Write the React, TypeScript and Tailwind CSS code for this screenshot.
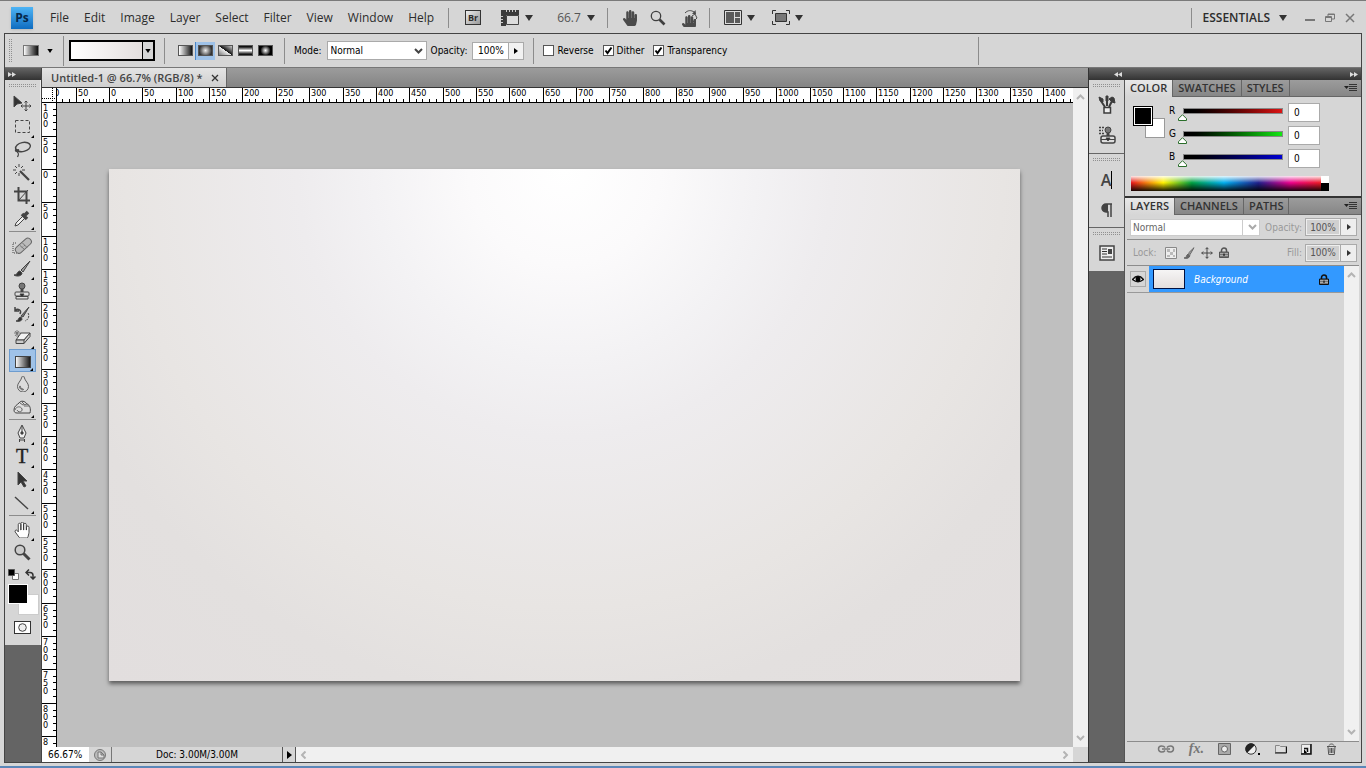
import { useState } from "react";
import type { ReactNode } from "react";
import { FaHandPaper, FaTint } from "react-icons/fa";

const ui = "font-['DejaVu_Sans_Condensed','DejaVu_Sans',sans-serif]";
const sans = "font-['Open_Sans','Noto_Sans',sans-serif]";

const menus = ["File", "Edit", "Image", "Layer", "Select", "Filter", "View", "Window", "Help"];

function Caret({ small = false }: { small?: boolean }) {
  return (
    <svg viewBox="0 0 8 6" className={`shrink-0 ${small ? "h-[4px] w-[6px] fill-black" : "h-[6px] w-[8px] fill-[#333]"}`}>
      <path d="M0 0h8L4 6z" />
    </svg>
  );
}

function RightCaret() {
  return (
    <svg viewBox="0 0 4 6" className="h-[6px] w-[4px] fill-current">
      <path d="M0 0l4 3-4 3z" />
    </svg>
  );
}

function Chevron({ className = "" }: { className?: string }) {
  return (
    <svg viewBox="0 0 9 6" className={`h-[6px] w-[9px] fill-none stroke-current stroke-2 ${className}`}>
      <path d="M1 1l3.500 3.500L8 1" />
    </svg>
  );
}

function Divider({ className = "" }: { className?: string }) {
  return <div className={`w-px shrink-0 bg-[#8c8c8c] ${className}`} />;
}

function Grip({ className = "" }: { className?: string }) {
  return (
    <svg viewBox="0 0 27 4" className={`h-[4px] w-[27px] ${className}`}>
      <path d="M0 .5h27M0 2.500h27" stroke="#909090" strokeDasharray="1 1" />
    </svg>
  );
}

/* ---------- menu bar ---------- */

function MenuBar() {
  return (
    <header className={`flex h-[33px] shrink-0 items-center border-t border-[#7a7a7a] px-[11px] pt-px ${sans} text-[#2c2c2c]`}>
      <div className="flex size-[22px] items-center justify-center bg-gradient-to-b from-[#4db4f5] to-[#0d6cc0] text-xs font-bold text-[#06284a] shadow">
        Ps
      </div>
      <nav className="ml-[17px] flex gap-[15px] text-xs">
        {menus.map((m) => (
          <button key={m}>{m}</button>
        ))}
      </nav>
      <Divider className="ml-[14px] h-5" />
      <button aria-label="Launch Bridge" className="ml-4 flex h-[15px] w-4 items-center justify-center border border-[#333] bg-gradient-to-br from-[#eee] to-[#999] text-[9px] leading-none font-bold">
        Br
      </button>
      <button aria-label="View extras" className="ml-5 flex items-center gap-[6px]">
        <svg viewBox="0 0 18 16" className="h-4 w-[18px]">
          <path d="M0 0h18v5H5v11H0z" fill="#3c3c3c" />
          <path d="M5.500 0v2M8.500 0v2M11.500 0v2M14.500 0v2M0 6.500h2M0 9.500h2M0 12.500h2" stroke="#ccc" />
          <path d="M5.500 5.500h12v9h-12z" fill="#ddd" stroke="#444" />
        </svg>
        <Caret />
      </button>
      <button className="ml-6 flex items-center gap-[6px] text-xs text-[#555]">
        66.7 <Caret />
      </button>
      <Divider className="ml-3 h-5" />
      <button aria-label="Hand" className="ml-[14px]">
        <FaHandPaper className="size-4 text-[#4a4a4a]" />
      </button>
      <button aria-label="Zoom" className="ml-3">
        <svg viewBox="0 0 16 16" className="size-4 fill-none stroke-[#3f3f3f]">
          <circle cx="6" cy="6" r="4.700" strokeWidth="1.300" />
          <path d="M9.500 9.500l5 5" strokeWidth="2.600" />
        </svg>
      </button>
      <button aria-label="Rotate view" className="ml-[14px]">
        <svg viewBox="0 0 18 18" className="size-[18px]">
          <FaHandPaper x="1" y="6" width="11" height="11" fill="#4a4a4a" />
          <path d="M5 4c3-3 6-3 9-1M12 7l3-2 2 4-5 5" fill="none" stroke="#4a4a4a" />
          <path d="M12 5l4 0-.5-4z" fill="#4a4a4a" />
        </svg>
      </button>
      <Divider className="ml-[11px] h-5" />
      <button aria-label="Arrange documents" className="ml-[14px] flex items-center gap-[5px]">
        <svg viewBox="0 0 18 16" className="h-4 w-[18px]">
          <path d="M.5.5h17v14H.5z" fill="#ddd" stroke="#333" />
          <path d="M2 2h8v11H2zM11 2h5v5h-5zM11 8h5v5h-5z" fill="#5a5a5a" />
        </svg>
        <Caret />
      </button>
      <button aria-label="Screen mode" className="ml-[17px] flex items-center gap-[5px]">
        <svg viewBox="0 0 18 15" className="h-[15px] w-[18px]">
          <path d="M.5 4V.5H4M14 .5h3.500V4M17.500 11v3.500H14M4 14.500H.5V11" fill="none" stroke="#333" />
          <path d="M3.500 3.500h11v8h-11z" fill="#777" stroke="#333" />
        </svg>
        <Caret />
      </button>
      <Divider className="ml-auto h-5" />
      <button className="ml-[11px] flex items-center gap-[9px] text-xs font-semibold">
        ESSENTIALS <Caret />
      </button>
      <div className="ml-[18px] flex items-center gap-[10px] text-[#777]">
        <button aria-label="Minimize">
          <svg viewBox="0 0 10 10" className="size-[10px] fill-none stroke-current stroke-2">
            <path d="M0 7h10" />
          </svg>
        </button>
        <button aria-label="Restore">
          <svg viewBox="0 0 10 10" className="size-[10px] fill-none stroke-current">
            <path d="M.5 3.500h6v5h-6zM.5 4.500h6M3 3V1h6.500v5H7M3 1.500h6" />
          </svg>
        </button>
        <button aria-label="Close">
          <svg viewBox="0 0 10 10" className="size-[10px] fill-none stroke-current">
            <path d="M1 1l8 8M9 1L1 9" strokeWidth="1.500" />
          </svg>
        </button>
      </div>
    </header>
  );
}

/* ---------- options bar ---------- */

const gradientKinds = [
  { name: "Linear", fill: "bg-[linear-gradient(90deg,#fff,#111)]" },
  { name: "Radial", fill: "bg-[radial-gradient(circle,#eee,#333_80%)]" },
  { name: "Angle", fill: "bg-[linear-gradient(35deg,#777,#eee_48%,#111_50%,#ccc)]" },
  { name: "Reflected", fill: "bg-[linear-gradient(180deg,#111_10%,#fff_50%,#111_90%)]" },
  { name: "Diamond", fill: "bg-[radial-gradient(circle,#fff,#000_65%)]" },
];

function Check({ label, on = false }: { label: string; on?: boolean }) {
  const [checked, setChecked] = useState(on);
  return (
    <label className="flex items-center gap-[3px]">
      <span className="grid">
        <input
          type="checkbox"
          checked={checked}
          onChange={(e) => setChecked(e.target.checked)}
          className="col-start-1 row-start-1 size-[11px] appearance-none border border-[#555] bg-white"
        />
        {checked && (
          <svg viewBox="0 0 11 11" className="pointer-events-none col-start-1 row-start-1 size-[11px] fill-none stroke-black stroke-2">
            <path d="M2.500 5.500l2 2.500 4-5.500" />
          </svg>
        )}
      </span>
      {label}
    </label>
  );
}

function OptionsBar() {
  const [kind, setKind] = useState("Radial");
  return (
    <div className={`flex h-[34px] shrink-0 items-center border-b border-[#777] pl-1 ${ui} text-[10px] text-black`}>
      <svg viewBox="0 0 4 24" className="h-6 w-1">
        <path d="M.5 0v24M2.500 0v24" stroke="#909090" strokeDasharray="1 1" />
      </svg>
      <button aria-label="Tool preset" className="ml-[10px] flex items-center gap-2">
        <span className="h-[11px] w-4 border border-[#777] bg-gradient-to-r from-white to-[#111]" />
        <Caret small />
      </button>
      <Divider className="ml-[10px] h-[30px]" />
      <button aria-label="Gradient picker" className="ml-[5px] flex h-[21px] w-[86px] border-2 border-black">
        <span className="h-full flex-1 bg-gradient-to-r from-white to-[#e3dedd]" />
        <span className="flex h-full w-[11px] items-center justify-center border-l border-black">
          <Caret small />
        </span>
      </button>
      <Divider className="ml-[9px] h-[26px]" />
      <div className="ml-[10px] flex">
        {gradientKinds.map((g) => (
          <button
            key={g.name}
            aria-label={g.name}
            onClick={() => setKind(g.name)}
            className={`flex h-[18px] w-5 items-center justify-center ${kind === g.name ? "border-l border-[#4b86c8] bg-[#9fc2e8]" : ""}`}
          >
            <span className={`h-[11px] w-[15px] border border-[#555] ${g.fill}`} />
          </button>
        ))}
      </div>
      <Divider className="ml-[9px] h-[26px]" />
      <label className="ml-[9px] flex items-center gap-[5px]">
        Mode:
        <span className="grid items-center">
          <select className="col-start-1 row-start-1 h-[19px] w-[100px] appearance-none border border-[#aaa] bg-white px-[3px]">
            <option>Normal</option>
          </select>
          <Chevron className="pointer-events-none col-start-1 row-start-1 mr-1 justify-self-end text-[#444]" />
        </span>
      </label>
      <label className="ml-1 flex items-center gap-[5px]">
        Opacity:
        <input defaultValue="100%" className="h-[18px] w-9 border border-r-0 border-[#aaa] bg-white text-center" />
      </label>
      <button aria-label="Opacity slider" className="flex h-[18px] w-4 items-center justify-center border border-[#aaa] bg-[#f2f2f2]">
        <RightCaret />
      </button>
      <Divider className="ml-[9px] h-[26px]" />
      <div className="ml-[9px] flex gap-[9px]">
        <Check label="Reverse" />
        <Check label="Dither" on />
        <Check label="Transparency" on />
      </div>
      <Divider className="mr-[382px] ml-auto h-[28px]" />
    </div>
  );
}

/* ---------- tools ---------- */

type Tool = { name: string; icon: ReactNode; menu?: boolean };

const toolGroups: Tool[][] = [
  [
    {
      name: "Move",
      icon: (
        <>
          <path d="M3 3v11l3-3 5-1z" fill="#333" />
          <path d="M15 8v10M10 13h10M13.500 9.500L15 8l1.500 1.500M13.500 16.500L15 18l1.500-1.500M11.500 11.500L10 13l1.500 1.500M18.500 11.500L20 13l-1.500 1.500" />
        </>
      ),
    },
    { name: "Marquee", menu: true, icon: <path d="M4.500 4.500h14v12h-14z" strokeDasharray="3 2" /> },
    {
      name: "Lasso",
      menu: true,
      icon: (
        <>
          <ellipse cx="12" cy="8" rx="7.500" ry="4.500" transform="rotate(-12 12 8)" strokeWidth="1.400" />
          <path d="M5.500 10c-2 1-1 3 1 2s1-2-1-1M6 12.500c2 2 2 3 .5 5.500" strokeWidth="1.300" />
        </>
      ),
    },
    {
      name: "Magic wand",
      menu: true,
      icon: (
        <>
          <path d="M9 9l9 9" strokeWidth="2.200" />
          <path d="M8 2v3M8 11v3M2 8h3M11 8h3M4 4l2 2M12 4l-2 2M4 12l2-2" />
        </>
      ),
    },
    {
      name: "Crop",
      menu: true,
      icon: (
        <>
          <path d="M7.500 2v13.500H19M3 6.500h12.500V19" strokeWidth="2" />
          <path d="M8 15l9-10" />
        </>
      ),
    },
    {
      name: "Eyedropper",
      menu: true,
      icon: (
        <>
          <path d="M4 18l1-3 7-7 2 2-7 7z" fill="#eee" />
          <path d="M11 6l5 5M13 8l4-4" strokeWidth="3.500" />
        </>
      ),
    },
  ],
  [
    {
      name: "Healing brush",
      menu: true,
      icon: (
        <>
          <path d="M8 18H2V8h3" strokeDasharray="1 1" />
          <rect x="3" y="7.500" width="19" height="7" rx="3.500" transform="rotate(-42 12 11)" fill="#bbb" stroke="#666" />
          <path d="M9 10.500l4.500 4M11.500 8l4.500 4.500M11 12.500l1-1M13 11l1-1" stroke="#777" />
        </>
      ),
    },
    {
      name: "Brush",
      menu: true,
      icon: (
        <>
          <path d="M19 3l-9 9 2 2z" fill="#999" />
          <path d="M3 17c4 0 3-4 6-4l2 2c0 3-5 4-8 2z" fill="#333" />
        </>
      ),
    },
    {
      name: "Clone stamp",
      menu: true,
      icon: (
        <>
          <circle cx="11" cy="5" r="3" fill="#777" />
          <path d="M11 8v3" strokeWidth="3" />
          <rect x="4" y="11" width="14" height="4" rx="1" fill="#ddd" />
          <path d="M5 15.500h12v2.500H5z" fill="#ddd" />
          <path d="M9 13h4l-2 3z" fill="#222" />
        </>
      ),
    },
    {
      name: "History brush",
      menu: true,
      icon: (
        <>
          <path d="M18 3l-8 9 2 1z" fill="#777" />
          <path d="M5 17c3 0 2-4 5-4l1 2c0 2-4 3-6 2z" fill="#333" />
          <path d="M4 6c3-2 7 0 5 4M4 3v4h4" strokeWidth="1.500" />
          <path d="M17 9c2 3 0 7-3 8" strokeDasharray="2 1" />
        </>
      ),
    },
    {
      name: "Eraser",
      menu: true,
      icon: (
        <>
          <path d="M10 6h9l-6 7H5z" fill="#f2f2f2" />
          <path d="M5 13v3.500h8l6-7V6l-6 7zM13 13v3.500" fill="#ccc" />
          <path d="M6 3v7M3 6h7M4 4l4 5M8 4L4 9" stroke="#666" strokeWidth=".8" />
        </>
      ),
    },
    {
      name: "Gradient",
      menu: true,
      icon: (
        <>
          <defs>
            <linearGradient id="toolGradient">
              <stop stopColor="#fff" />
              <stop offset="1" stopColor="#111" />
            </linearGradient>
          </defs>
          <rect x="4.500" y="6.500" width="15" height="11" fill="url(#toolGradient)" />
        </>
      ),
    },
    {
      name: "Blur",
      menu: true,
      icon: <FaTint x="4" y="3" width="13" height="15" fill="#dcdcdc" stroke="#555" strokeWidth="30" />,
    },
    {
      name: "Sponge",
      menu: true,
      icon: (
        <>
          <path d="M3 14c0-4 3-5 5-7 2-3 6-2 8 1 3 1 4 5 3 9H6c-2 0-3-1-3-3z" fill="#ddd" />
          <path d="M4 14c1-4 6-4 7-1s-4 4-5 1M9 7l3 2 4-1M11 6l2 2M13 10h5" stroke="#666" />
        </>
      ),
    },
  ],
  [
    {
      name: "Pen",
      menu: true,
      icon: (
        <>
          <path d="M11 2l4 8-2 5H9l-2-5z" fill="#eee" />
          <path d="M11 3v6M8 17h6M8.500 16v3M13.500 16v3" />
          <circle cx="11" cy="10" r="1.200" fill="#333" />
        </>
      ),
    },
    {
      name: "Type",
      menu: true,
      icon: (
        <text x="11" y="17" textAnchor="middle" fontSize="20" fontFamily="Liberation Serif, serif" fill="#222" stroke="#222" strokeWidth=".4">
          T
        </text>
      ),
    },
    { name: "Path selection", menu: true, icon: <path d="M7 3v13l3-3 3 5 2-1-3-5h4z" fill="#333" /> },
    { name: "Line", menu: true, icon: <path d="M4 5l13 12" strokeWidth="1.400" /> },
  ],
  [
    {
      name: "Hand",
      menu: true,
      icon: <FaHandPaper x="3" y="3" width="16" height="16" fill="#fff" stroke="#333" strokeWidth="28" />,
    },
    {
      name: "Zoom",
      icon: (
        <>
          <circle cx="9" cy="8" r="4.800" fill="#ccc" strokeWidth="1.500" />
          <path d="M12.500 11.500l6 6" strokeWidth="3" />
        </>
      ),
    },
  ],
];

function DoubleArrow({ left = false }: { left?: boolean }) {
  return (
    <svg viewBox="0 0 8 5" className="h-[5px] w-[8px] fill-[#ddd]">
      {left ? <path d="M4 0v5L0 2.500zM8 0v5L4 2.500z" /> : <path d="M0 0v5l4-2.500zM4 0v5l4-2.500z" />}
    </svg>
  );
}

function Toolbar() {
  const [active, setActive] = useState("Gradient");
  return (
    <aside className="flex w-[37px] shrink-0 flex-col border-r border-[#444] bg-[#646464]">
      <div className="flex h-3 items-center bg-gradient-to-b from-[#646464] to-[#333] pl-[3px]">
        <DoubleArrow />
      </div>
      <div className="flex flex-col items-center border-r border-[#f0f0f0] bg-[#d6d6d6] pr-px pb-[11px]">
        <Grip className="mt-1 mb-1" />
        {toolGroups.map((group, i) => (
          <div key={i} className={`flex flex-col ${i > 0 ? "mt-px border-t border-[#8c8c8c] pt-[2px]" : ""}`}>
            {group.map((tool) => (
              <button
                key={tool.name}
                aria-label={tool.name}
                onClick={() => setActive(tool.name)}
                className={`relative h-[23px] w-[27px] ${active === tool.name ? "border border-[#6d9ccf] bg-[#9fc2e8]" : ""}`}
              >
                <svg viewBox="0 0 22 22" className="mx-auto size-[22px] fill-none stroke-[#444]">
                  {tool.icon}
                </svg>
                {tool.menu && (
                  <svg viewBox="0 0 4 4" className="absolute right-[2px] bottom-0 size-[3px] fill-black">
                    <path d="M4 0v4H0z" />
                  </svg>
                )}
              </button>
            ))}
          </div>
        ))}
        <div className="mt-[5px] flex w-7 justify-between">
          <button aria-label="Default colors">
            <svg viewBox="0 0 11 11" className="size-[11px]">
              <path d="M4.500 4.500h6v6h-6z" fill="#fff" stroke="#777" />
              <path d="M.5.5h6v6h-6z" stroke="#555" />
            </svg>
          </button>
          <button aria-label="Switch colors">
            <svg viewBox="0 0 11 11" className="size-[11px] fill-none stroke-[#333] stroke-[1.500]">
              <path d="M1 3.500h4q3 0 3 3V10M4 .5l-3 3 3 3M5.500 7.500L8 10l2.500-2.500" />
            </svg>
          </button>
        </div>
        <div className="mt-1 grid w-[31px] self-end">
          <button aria-label="Background color" className="col-start-1 row-start-1 mt-[10px] size-[21px] justify-self-end border border-[#ccc] bg-white" />
          <button aria-label="Foreground color" className="relative col-start-1 row-start-1 size-5 border border-white bg-black" />
        </div>
        <button aria-label="Quick mask" className="mt-[6px] flex h-[13px] w-[17px] items-center justify-center border border-[#333] bg-white">
          <svg viewBox="0 0 9 9" className="size-[9px] fill-[#eee] stroke-[#444]">
            <circle cx="4.500" cy="4.500" r="3.800" />
          </svg>
        </button>
      </div>
    </aside>
  );
}

/* ---------- document ---------- */

// screen pixels per 50 document pixels at 66.7% zoom
const STEP = 33.36;

function ticks(from: number, count: number, origin: number) {
  return Array.from({ length: count }, (_, i) => {
    const n = from + i;
    return { value: Math.abs(n * 50), pos: Math.round(origin + n * STEP) };
  });
}

function HorizontalRuler() {
  return (
    <svg className={`h-[15px] min-w-0 flex-1 bg-white ${ui} text-[9px]`}>
      {ticks(-2, 31, 52).map((t) => (
        <g key={t.pos}>
          <path d={`M${t.pos + 0.5} 0v15`} stroke="#000" />
          {[1, 2, 3, 4].map((k) => (
            <path key={k} d={`M${t.pos + Math.round((k * STEP) / 5) + 0.5} 11v4`} stroke="#000" />
          ))}
          <text x={t.pos + 2} y="8">
            {t.value}
          </text>
        </g>
      ))}
      <path d="M0 14.500h4000" stroke="#000" />
    </svg>
  );
}

function VerticalRuler() {
  return (
    <svg className={`h-full w-[15px] shrink-0 bg-white ${ui} text-[9px]`}>
      {ticks(-2, 20, 66).map((t) => (
        <g key={t.pos}>
          <path d={`M0 ${t.pos + 0.5}h15`} stroke="#000" />
          {[1, 2, 3, 4].map((k) => (
            <path key={k} d={`M11 ${t.pos + Math.round((k * STEP) / 5) + 0.5}h4`} stroke="#000" />
          ))}
          {String(t.value)
            .split("")
            .slice(0, t.value > 800 ? 1 : 3)
            .map((digit, k) => (
              <text key={k} x="1" y={t.pos + 9 + k * 8}>
                {digit}
              </text>
            ))}
        </g>
      ))}
      <path d="M14.500 0v3000" stroke="#000" />
    </svg>
  );
}

function DocumentWindow() {
  return (
    <main className="flex min-w-0 flex-1 flex-col bg-[#bfbfbf]">
      <div className={`flex h-5 shrink-0 border-b border-[#333] bg-gradient-to-b from-[#9c9c9c] to-[#848484] ${sans}`}>
        <div className="flex items-center gap-2 border-r border-[#666] bg-gradient-to-b from-[#e4e4e4] to-[#cfcfcf] pt-px pr-[7px] pl-[9px] text-[11px] font-semibold text-[#444]">
          Untitled-1 @ 66.7% (RGB/8) *
          <button aria-label="Close document">
            <svg viewBox="0 0 8 8" className="size-2 stroke-[#333] stroke-[1.300]">
              <path d="M1 1l6 6M7 1L1 7" />
            </svg>
          </button>
        </div>
      </div>
      <div className="flex min-h-0 flex-1">
        <div className="flex min-w-0 flex-1 flex-col">
          <div className="flex">
            <svg viewBox="0 0 15 15" className="size-[15px] shrink-0 bg-white">
              <path d="M10.500 0v15M0 10.500h15" stroke="#000" strokeDasharray="1 1" />
              <path d="M14.500 0v15M0 14.500h15" stroke="#000" />
            </svg>
            <HorizontalRuler />
          </div>
          <div className="flex min-h-0 flex-1">
            <VerticalRuler />
            <div className="min-w-0 flex-1 overflow-hidden pt-[66px] pr-[53px] pl-[52px]">
              <div className="aspect-[1366/768] w-full bg-[radial-gradient(circle_at_50%_0%,#ffffff_0%,#fbfafb_14%,#f3f2f4_28%,#eeecee_39%,#e8e5e3_64%,#e3e0df_78%,#e2dede_100%)] shadow-[0_3px_4px_rgba(0,0,0,0.500)]" />
            </div>
          </div>
        </div>
        <div className="flex w-[15px] shrink-0 flex-col items-center justify-between bg-[#f0f0f0] py-[6px] text-[#b4b4b4]">
          <Chevron className="rotate-180" />
          <Chevron />
        </div>
      </div>
      <div className={`flex h-[15px] shrink-0 bg-[#d6d6d6] ${ui} text-[10px] text-black`}>
        <input aria-label="Zoom level" defaultValue="66.67%" className="w-[47px] bg-white pl-[6px]" />
        <button aria-label="Version cue" className="flex w-[23px] items-center justify-center border-r border-[#777]">
          <svg viewBox="0 0 12 12" className="size-3 fill-[#bbb] stroke-[#777]">
            <circle cx="6" cy="6" r="5.500" />
            <path d="M4 3h3v3h3v3H4zM7 3l3 3" fill="#ddd" />
          </svg>
        </button>
        <div className="flex w-[171px] items-center justify-center border-r border-[#555]">Doc: 3.00M/3.00M</div>
        <button aria-label="Status menu" className="flex w-[13px] items-center justify-center border-r border-[#555]">
          <svg viewBox="0 0 5 8" className="h-2 w-[5px]">
            <path d="M0 0l5 4-5 4z" />
          </svg>
        </button>
        <div className="flex flex-1 items-center justify-between bg-[#f0f0f0] px-[3px] text-[#b4b4b4]">
          <Chevron className="rotate-90" />
          <Chevron className="-rotate-90" />
        </div>
        <div className="w-[15px]" />
      </div>
    </main>
  );
}

/* ---------- panels ---------- */

function Dock() {
  return (
    <div className="flex w-9 shrink-0 flex-col border-r border-[#555] bg-[#646464]">
      <div className="flex h-[74px] flex-col items-center border-b border-[#666] bg-[#d6d6d6] pt-1">
        <Grip />
        <button aria-label="Brushes" className="mt-[7px]">
          <svg viewBox="0 0 18 20" className="h-5 w-[18px] fill-[#3c3c3c] stroke-[#3c3c3c]">
            <path d="M7 12L3 6M9 11V2M11 12l3-6" strokeWidth="2" fill="none" />
            <path d="M1 2l4 2v3L2 6zM11 4l3-2 2 1 1 5-3-1zM8 1h2v5H8z" />
            <path d="M6 12.500h6.500v5.500H6z" fill="#eee" strokeWidth="1.500" />
          </svg>
        </button>
        <button aria-label="Clone source" className="mt-[11px]">
          <svg viewBox="0 0 18 18" className="size-[18px] fill-none stroke-[#444]">
            <path d="M1 1.500h5M1 4.500h4M1 7.500h5" strokeDasharray="2 1" strokeWidth="1.500" />
            <circle cx="10" cy="4" r="3" fill="#777" />
            <path d="M10 7v4" strokeWidth="3" />
            <rect x="3" y="10" width="14" height="7" rx="2" fill="#ddd" strokeWidth="1.500" />
            <path d="M3 13.500h14" />
            <path d="M8 12h4l-2 3z" fill="#222" />
          </svg>
        </button>
      </div>
      <div className="flex h-[74px] flex-col items-center border-b border-[#666] bg-[#d6d6d6] pt-1">
        <Grip />
        <button aria-label="Character" className={`mt-[9px] flex h-[18px] items-center border-r border-black text-base ${sans} font-semibold text-[#444]`}>
          A
        </button>
        <button aria-label="Paragraph" className="mt-[14px]">
          <svg viewBox="0 0 12 15" className="h-[15px] w-3">
            <path d="M11 1H5a4 4 0 000 8h2v5M10 1v13" fill="none" stroke="#444" strokeWidth="1.500" />
            <path d="M7 1H5a4 4 0 000 8h2z" fill="#444" />
          </svg>
        </button>
      </div>
      <div className="flex h-[43px] flex-col items-center bg-[#d6d6d6] pt-1">
        <Grip />
        <button aria-label="Layer comps" className="mt-[9px]">
          <svg viewBox="0 0 16 16" className="size-4">
            <path d="M1 1h14v14H1z" fill="#eee" stroke="#444" strokeWidth="1.500" />
            <path d="M3 4h5M3 6.500h5M3 9h5M3 12h10" stroke="#333" />
            <path d="M9 4h4v5H9z" fill="#444" />
          </svg>
        </button>
      </div>
    </div>
  );
}

function Tabs({ names }: { names: string[] }) {
  return (
    <div className={`flex h-[17px] shrink-0 bg-gradient-to-b from-[#9c9c9c] to-[#858585] ${sans} text-[11px] font-semibold text-[#333]`}>
      {names.map((name, i) => (
        <button
          key={name}
          className={`flex items-center border-r border-[#666] px-[5px] ${i === 0 ? "bg-gradient-to-b from-[#e8e8e8] to-[#d6d6d6]" : "border-b"}`}
        >
          {name}
        </button>
      ))}
      <div className="flex flex-1 items-center justify-end border-b border-[#666] pr-1">
        <button aria-label="Panel menu">
          <svg viewBox="0 0 13 8" className="h-2 w-[13px]">
            <path d="M0 2h5L2.500 5z" fill="#222" />
            <path d="M5 .5h8M5 2.500h8M5 4.500h8M5 6.500h8" stroke="#333" />
          </svg>
        </button>
      </div>
    </div>
  );
}

const channels = [
  { name: "R", bar: "bg-gradient-to-r from-black to-[#dc1414]" },
  { name: "G", bar: "bg-gradient-to-r from-black to-[#14e614]" },
  { name: "B", bar: "bg-gradient-to-r from-black to-[#0000d2]" },
];

function ColorPanel() {
  return (
    <section className={`flex h-[118px] shrink-0 flex-col border-b-2 border-[#333] bg-[#d6d6d6] ${ui}`}>
      <Tabs names={["COLOR", "SWATCHES", "STYLES"]} />
      <div className="flex pt-[6px] pl-2 text-[10px]">
        <div className="mt-[3px] grid h-8 w-8 shrink-0">
          <button aria-label="Set background color" className="col-start-1 row-start-1 size-5 self-end justify-self-end border border-[#999] bg-white" />
          <button aria-label="Set foreground color" className="relative col-start-1 row-start-1 size-5 border border-black bg-black outline-1 -outline-offset-2 outline-white" />
        </div>
        <div className="ml-1 flex flex-col gap-1">
          {channels.map((c) => (
            <label key={c.name} className="flex h-[19px] items-center">
              <span className="w-[14px] pb-1">{c.name}</span>
              <span className="flex flex-col pt-[3px]">
                <span className={`h-[6px] w-[100px] border border-[#888] ${c.bar}`} />
                <svg viewBox="0 0 9 7" className="-ml-[5px] h-[7px] w-[9px] fill-white stroke-[#2a6e2a]">
                  <path d="M4.500.7l4 4v1.800h-8V4.700z" />
                </svg>
              </span>
              <input defaultValue="0" className="ml-[5px] h-[19px] w-8 border border-[#aaa] bg-white pl-[5px]" />
            </label>
          ))}
        </div>
      </div>
      <div className="mt-[8px] ml-[6px] flex h-[15px] w-[198px] shrink-0">
        <div className="flex-1 bg-[linear-gradient(180deg,rgba(255,255,255,0.900),transparent_45%,rgba(0,0,0,0.900)),linear-gradient(90deg,#e8141c,#fff200_17%,#00a040_32%,#00aeef_49%,#20208c_67%,#ec008c_84%,#ed1c24)]" />
        <div className="w-2 bg-gradient-to-b from-white from-50% to-black to-50%" />
      </div>
    </section>
  );
}

function Percent({ label }: { label: string }) {
  return (
    <label className="ml-auto flex items-center gap-[3px] text-[#999]">
      {label}
      <span className="flex h-[18px] border border-[#aaa]">
        <input defaultValue="100%" className="w-[34px] border border-[#eee] bg-[#d0d0d0] text-center text-[#555]" />
        <span className="flex w-4 items-center justify-center border-l border-[#aaa] bg-[#eee] text-[#333]">
          <RightCaret />
        </span>
      </span>
    </label>
  );
}

function Padlock({ className = "" }: { className?: string }) {
  return (
    <svg viewBox="0 0 10 11" className={`h-[11px] w-[10px] ${className}`}>
      <path d="M2.500 5V3.500a2.500 2.500 0 015 0V5" fill="none" stroke="currentColor" strokeWidth="1.500" />
      <path d="M.5 5h9v5.500h-9z" fill="#777" stroke="currentColor" />
      <path d="M1 6.500h8M1 8.500h8" stroke="#aaa" />
      <path d="M4.500 6.500h1V9h-1z" />
    </svg>
  );
}

const footer: { name: string; icon: ReactNode }[] = [
  {
    name: "Link layers",
    icon: (
      <svg viewBox="0 0 18 8" className="h-2 w-[18px] fill-none stroke-[#777] stroke-[1.500]">
        <path d="M8 2.500Q7 1 4.500 1a3 3 0 000 6Q7 7 8 5.500M10 2.500Q11 1 13.500 1a3 3 0 010 6Q11 7 10 5.500M5 4h8" />
      </svg>
    ),
  },
  {
    name: "Layer style",
    icon: <span className="font-['Liberation_Serif',serif] text-sm leading-none font-bold text-[#777] italic">fx.</span>,
  },
  {
    name: "Add mask",
    icon: (
      <svg viewBox="0 0 13 12" className="h-3 w-[13px]">
        <path d="M.5.5h12v11H.5z" fill="#aaa" stroke="#666" />
        <circle cx="6.500" cy="6" r="3" fill="#eee" stroke="#666" />
      </svg>
    ),
  },
  {
    name: "Adjustment layer",
    icon: (
      <svg viewBox="0 0 16 12" className="h-3 w-4">
        <circle cx="6" cy="6" r="5.200" fill="#eee" stroke="#333" />
        <path d="M2 10A5.500 5.500 0 0110 2z" fill="#222" />
        <path d="M13 10h2v2h-2z" />
      </svg>
    ),
  },
  {
    name: "New group",
    icon: (
      <svg viewBox="0 0 12 10" className="h-[10px] w-3">
        <path d="M.5 1.500h4l1 1h5.500v6H.5z" fill="#ddd" stroke="#888" />
        <path d="M0 9h11.500V2.500" fill="none" stroke="#111" />
      </svg>
    ),
  },
  {
    name: "New layer",
    icon: (
      <svg viewBox="0 0 11 11" className="size-[11px]">
        <path d="M.5.5h9v9h-9z" fill="#eee" stroke="#888" />
        <path d="M0 10h10V0M3 4.500h3.500V8" fill="none" stroke="#111" strokeWidth="1.500" />
        <path d="M3 5l3 4H3z" />
      </svg>
    ),
  },
  {
    name: "Delete layer",
    icon: (
      <svg viewBox="0 0 11 12" className="h-3 w-[11px] fill-none stroke-[#555]">
        <path d="M1 3.500h9M2 4l.7 7.500h5.600L9 4M4 5v5M5.500 5v5M7 5v5M3 2.500c1-2 4-2 5 0" />
      </svg>
    ),
  },
];

function LayersPanel() {
  return (
    <section className={`flex min-h-0 flex-1 flex-col bg-[#d6d6d6] ${ui} text-[10px]`}>
      <Tabs names={["LAYERS", "CHANNELS", "PATHS"]} />
      <div className="mx-[2px] flex h-[25px] shrink-0 items-center border-b border-[#8c8c8c] pr-[2px] pl-[3px]">
        <span className="grid items-center">
          <select aria-label="Blend mode" className="col-start-1 row-start-1 h-[17px] w-[130px] appearance-none border border-[#ccc] bg-white px-[2px] text-[#666]">
            <option>Normal</option>
          </select>
          <span className="pointer-events-none col-start-1 row-start-1 flex h-[15px] items-center justify-self-end border-l border-[#ccc] pr-[3px] pl-[5px] text-[#aaa]">
            <Chevron />
          </span>
        </span>
        <Percent label="Opacity:" />
      </div>
      <div className="mx-[2px] flex h-[26px] shrink-0 items-center border-b border-[#8c8c8c] pr-[2px] pl-[6px] text-[#999]">
        Lock:
        <div className="ml-2 flex items-center gap-[6px]">
          <button aria-label="Lock transparency">
            <svg viewBox="0 0 12 12" className="size-3">
              <path d="M.5.5h11v11H.5z" fill="#eee" stroke="#888" />
              <path d="M2 2h3v3H2zM8 2h2v3H8zM5 5h3v3H5zM2 8h3v2H2zM8 8h2v2H8z" fill="#bbb" />
            </svg>
          </button>
          <button aria-label="Lock pixels">
            <svg viewBox="0 0 12 12" className="size-3 stroke-[#666]">
              <path d="M11 .7L5.500 6 7 7.500z" fill="#aaa" />
              <path d="M1 11c3 0 2-3 4-4l2 1.500C6.500 11 4 12 1 11z" fill="#666" />
            </svg>
          </button>
          <button aria-label="Lock position">
            <svg viewBox="0 0 12 12" className="size-3 fill-none stroke-[#444]">
              <path d="M6 .7v10.600M.7 6h10.600M4.500 2.200L6 .7l1.500 1.500M4.500 9.800L6 11.300l1.500-1.500M2.200 4.500L.7 6l1.500 1.500M9.800 4.500L11.300 6 9.800 7.500" />
            </svg>
          </button>
          <button aria-label="Lock all">
            <Padlock className="text-[#555]" />
          </button>
        </div>
        <Percent label="Fill:" />
      </div>
      <div className="mx-[2px] flex min-h-0 flex-1 border-b border-[#8c8c8c]">
        <div className="flex-1">
          <div className="flex h-[27px] items-center border-b border-[#999] bg-[#3399ff]">
            <div className="flex h-full w-[22px] items-center bg-[#d6d6d6] pl-[3px]">
              <button aria-label="Layer visibility" className="flex size-4 items-center justify-center border border-[#aaa]">
                <svg viewBox="0 0 12 8" className="h-2 w-3 shrink-0">
                  <path d="M.5 4.500Q6-2 11.500 4.500 6 9 .5 4.500z" fill="#fff" stroke="#111" strokeWidth="1.500" />
                  <circle cx="6" cy="4" r="2.500" />
                </svg>
              </button>
            </div>
            <div className="ml-1 h-5 w-8 border border-[#001040] bg-gradient-to-b from-[#f6f5f5] to-[#e3dedd]" />
            <span className="ml-[9px] text-white italic">Background</span>
            <span className="mr-[15px] ml-auto">
              <Padlock className="text-[#111]" />
            </span>
          </div>
        </div>
        <div className="flex w-[15px] flex-col items-center justify-between bg-[#f0f0f0] py-[6px] text-[#b4b4b4]">
          <Chevron className="rotate-180" />
          <Chevron />
        </div>
      </div>
      <div className="flex h-5 shrink-0 items-center justify-end gap-[14px] pr-6 pb-[6px]">
        {footer.map((f) => (
          <button key={f.name} aria-label={f.name}>
            {f.icon}
          </button>
        ))}
      </div>
    </section>
  );
}

export default function App() {
  return (
    <div className="flex h-screen flex-col overflow-hidden bg-[#d6d6d6]">
      <MenuBar />
      <div className="mx-1 mb-[3px] flex min-h-0 flex-1 flex-col border border-[#444]">
        <OptionsBar />
        <div className="flex min-h-0 flex-1">
          <Toolbar />
          <DocumentWindow />
          <div className="flex w-[273px] shrink-0 flex-col border-l border-[#333]">
            <div className="flex h-3 shrink-0 items-center bg-gradient-to-b from-[#646464] to-[#333] pr-[3px] pl-[25px]">
              <DoubleArrow left />
              <span className="ml-auto flex">
                <DoubleArrow />
              </span>
            </div>
            <div className="flex min-h-0 flex-1">
              <Dock />
              <div className="flex min-w-0 flex-1 flex-col">
                <ColorPanel />
                <LayersPanel />
              </div>
            </div>
          </div>
        </div>
      </div>
      <div className="h-[2px] shrink-0 bg-[#5b87b8]" />
    </div>
  );
}
